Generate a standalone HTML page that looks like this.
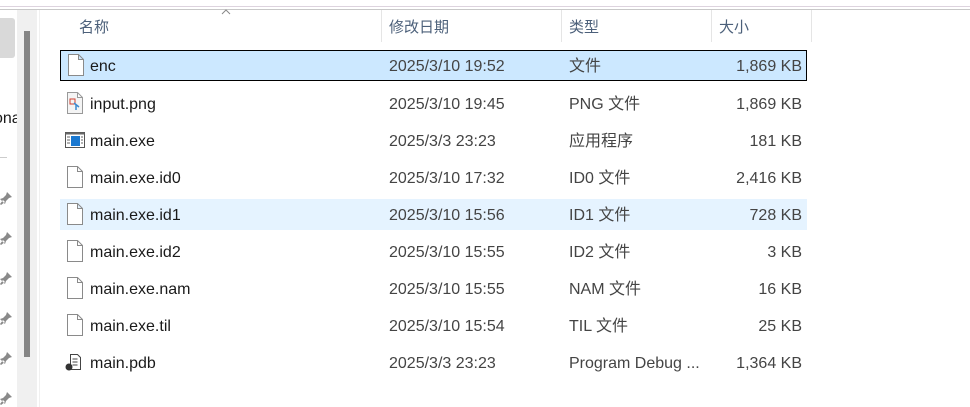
<!DOCTYPE html><html><head><meta charset="utf-8"><style>
body{margin:0;width:970px;height:407px;background:#fff;position:relative;overflow:hidden;font-family:"Liberation Sans","Noto Sans CJK SC",sans-serif;font-size:16px;color:#1a1a1a}
.a{position:absolute}
.row{position:absolute;left:60px;width:747px;height:31px}
.t{position:absolute;top:7px;white-space:nowrap;line-height:20px;height:20px}
.n{left:30px}.d{left:329px;color:#444}.ty{left:509px;color:#444}.s{right:5px;color:#444}
.h{position:absolute;top:18px;color:#4c607a;font-size:15px;line-height:20px}
.sep{position:absolute;top:10px;width:1px;height:32px;background:#e5e5e5}
</style></head><body>
<div class="a" style="left:0;top:6px;width:970px;height:1px;background:#ddd3de"></div>
<div class="a" style="left:0;top:9px;width:970px;height:1px;background:#c8c8c8"></div>
<div class="a" style="left:0;top:18px;width:15px;height:40px;background:#d9d9d9;border-radius:0 3px 3px 0"></div>
<div class="a" style="left:-6px;top:110px;font-size:16px">ona</div>
<div class="a" style="left:0;top:157px;width:7px;height:1px;background:#ccc"></div>
<div class="a" style="left:17px;top:10px;width:20px;height:397px;background:#f0f0f0"></div>
<div class="a" style="left:24px;top:31px;width:6px;height:326px;background:#858585"></div>
<div class="a" style="left:39px;top:10px;width:1px;height:397px;background:#f0f0f0"></div>
<svg class="a" style="left:0;top:190px" width="14" height="217" viewBox="0 0 14 217">
<g fill="#8a8a8a">
<path d="M7 2l5 5-3 1-3 3-1 3-5-5 3-1 3-3z M3 10l-3 4 1 1 4-3z"/>
<path transform="translate(0,40)" d="M7 2l5 5-3 1-3 3-1 3-5-5 3-1 3-3z M3 10l-3 4 1 1 4-3z"/>
<path transform="translate(0,80)" d="M7 2l5 5-3 1-3 3-1 3-5-5 3-1 3-3z M3 10l-3 4 1 1 4-3z"/>
<path transform="translate(0,120)" d="M7 2l5 5-3 1-3 3-1 3-5-5 3-1 3-3z M3 10l-3 4 1 1 4-3z"/>
<path transform="translate(0,160)" d="M7 2l5 5-3 1-3 3-1 3-5-5 3-1 3-3z M3 10l-3 4 1 1 4-3z"/>
<path transform="translate(0,200)" d="M7 2l5 5-3 1-3 3-1 3-5-5 3-1 3-3z M3 10l-3 4 1 1 4-3z"/>
</g></svg>
<div class="h" style="left:79px">名称</div>
<svg class="a" style="left:221px;top:9px" width="10" height="6"><path d="M1 5l4-4 4 4" fill="none" stroke="#888"/></svg>
<div class="sep" style="left:381px"></div><div class="h" style="left:389px">修改日期</div>
<div class="sep" style="left:561px"></div><div class="h" style="left:569px">类型</div>
<div class="sep" style="left:711px"></div><div class="h" style="left:719px">大小</div>
<div class="sep" style="left:811px"></div>

<div class="row" style="top:50px;background:#cce8ff;box-sizing:border-box;border:1px solid #000;"><svg class="a" style="left:6px;top:3px" width="18" height="22"><path d="M1.5 .5h10l5 5v16h-15z M11.5 .5v5h5" fill="#fff" stroke="#8a8a8a"/></svg><span class="t n" style="top:6px;left:29px">enc</span><span class="t d" style="top:6px;left:328px">2025/3/10 19:52</span><span class="t ty" style="top:6px;left:508px">文件</span><span class="t s" style="top:6px;right:4px">1,869 KB</span></div>

<div class="row" style="top:88px"><svg class="a" style="left:6px;top:4px" width="18" height="22"><path d="M1.5 .5h10l5 5v16h-15z M11.5 .5v5h5" fill="#f4f4f4" stroke="#999"/><rect x="4" y="7" width="5" height="5" fill="none" stroke="#d04030"/><path d="M8 11l5 4M10 13v5" stroke="#3a8ad0" stroke-width="1.5"/></svg><span class="t n">input.png</span><span class="t d">2025/3/10 19:45</span><span class="t ty">PNG 文件</span><span class="t s">1,869 KB</span></div>

<div class="row" style="top:125px"><svg class="a" style="left:5px;top:7px" width="20" height="17"><rect x=".5" y=".5" width="19" height="15" fill="#fff" stroke="#555"/><rect x=".5" y=".5" width="19" height="2" fill="#666"/><rect x="6" y="4" width="9" height="10" fill="#1a78d0"/><path d="M2 5h3M2 8h3M2 11h3M16 5h2M16 8h2M16 11h2" stroke="#666"/></svg><span class="t n">main.exe</span><span class="t d">2025/3/3 23:23</span><span class="t ty">应用程序</span><span class="t s">181 KB</span></div>

<div class="row" style="top:162px"><svg class="a" style="left:6px;top:4px" width="18" height="22"><path d="M1.5 .5h10l5 5v16h-15z M11.5 .5v5h5" fill="#fff" stroke="#8a8a8a"/></svg><span class="t n">main.exe.id0</span><span class="t d">2025/3/10 17:32</span><span class="t ty">ID0 文件</span><span class="t s">2,416 KB</span></div>

<div class="row" style="top:199px;background:#e5f3ff"><svg class="a" style="left:6px;top:4px" width="18" height="22"><path d="M1.5 .5h10l5 5v16h-15z M11.5 .5v5h5" fill="#fff" stroke="#8a8a8a"/></svg><span class="t n">main.exe.id1</span><span class="t d">2025/3/10 15:56</span><span class="t ty">ID1 文件</span><span class="t s">728 KB</span></div>

<div class="row" style="top:236px"><svg class="a" style="left:6px;top:4px" width="18" height="22"><path d="M1.5 .5h10l5 5v16h-15z M11.5 .5v5h5" fill="#fff" stroke="#8a8a8a"/></svg><span class="t n">main.exe.id2</span><span class="t d">2025/3/10 15:55</span><span class="t ty">ID2 文件</span><span class="t s">3 KB</span></div>

<div class="row" style="top:273px"><svg class="a" style="left:6px;top:4px" width="18" height="22"><path d="M1.5 .5h10l5 5v16h-15z M11.5 .5v5h5" fill="#fff" stroke="#8a8a8a"/></svg><span class="t n">main.exe.nam</span><span class="t d">2025/3/10 15:55</span><span class="t ty">NAM 文件</span><span class="t s">16 KB</span></div>

<div class="row" style="top:310px"><svg class="a" style="left:6px;top:4px" width="18" height="22"><path d="M1.5 .5h10l5 5v16h-15z M11.5 .5v5h5" fill="#fff" stroke="#8a8a8a"/></svg><span class="t n">main.exe.til</span><span class="t d">2025/3/10 15:54</span><span class="t ty">TIL 文件</span><span class="t s">25 KB</span></div>

<div class="row" style="top:347px"><svg class="a" style="left:5px;top:7px" width="18" height="18"><path d="M5.5 .5h7l3 3v12h-10z" fill="#fff" stroke="#444"/><path d="M7.5 5h5M7.5 8h5M7.5 11h5" stroke="#444"/><circle cx="4" cy="13" r="3.5" fill="#333"/></svg><span class="t n">main.pdb</span><span class="t d">2025/3/3 23:23</span><span class="t ty">Program Debug ...</span><span class="t s">1,364 KB</span></div>
</body></html>
